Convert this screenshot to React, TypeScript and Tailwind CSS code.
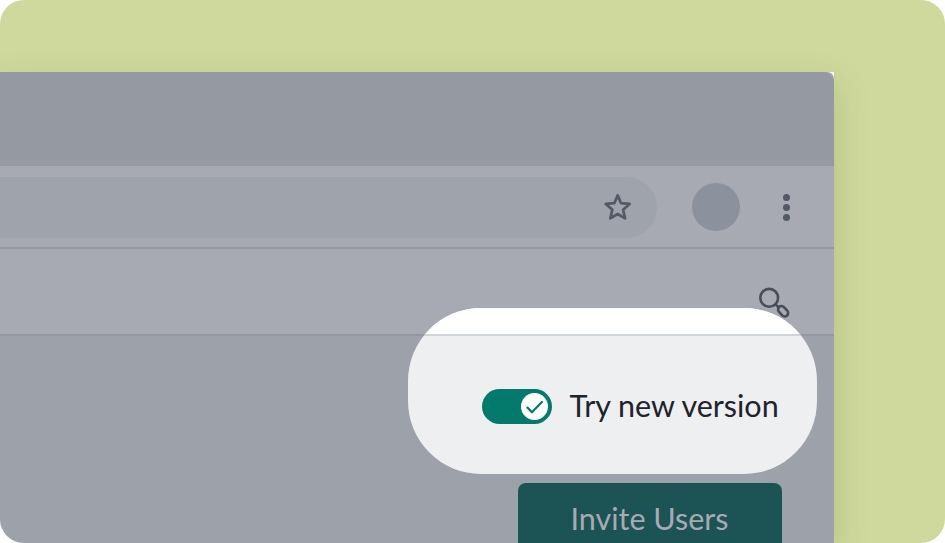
import React from "react";

function StarIcon() {
  return (
    <svg className="h-[28px] w-[28px]" viewBox="0 0 28 28" fill="none" stroke="#545966" strokeWidth="2.7" strokeLinejoin="round">
      <path d="M13.7 2.4 L17 10.1 L25.6 10.9 L19.1 16.8 L21.1 25.4 L13.7 21 L6.3 25.4 L8.3 16.8 L1.8 10.9 L10.4 10.1 Z" />
    </svg>
  );
}

function SearchIcon() {
  return (
    <svg className="h-[32px] w-[32px]" viewBox="0 0 32 32" fill="none" stroke="#474d59" strokeWidth="2.6">
      <circle cx="11.2" cy="10.8" r="8.9" />
      <path d="M17.5 17.3 L21.2 21" />
      <rect x="19.3" y="20.9" width="11.6" height="6.8" rx="3.4" transform="rotate(47 25.1 24.3)" />
    </svg>
  );
}

function Toggle() {
  return (
    <div className="flex h-[35px] w-[70px] shrink-0 items-center justify-end rounded-full bg-[#047a6c] pr-1">
      <div className="flex h-[27px] w-[27px] items-center justify-center rounded-full bg-white">
        <svg className="h-[27px] w-[27px]" viewBox="0 0 27 27" fill="none" stroke="#047a6c" strokeWidth="2.2" strokeLinecap="round" strokeLinejoin="round">
          <path d="M6.4 14.6 L10.9 19.3 L20.9 9" />
        </svg>
      </div>
    </div>
  );
}

function Spotlight() {
  return (
    <div className="absolute left-[408px] top-[236px] flex h-[166px] w-[408.5px] flex-col overflow-hidden rounded-[73px] bg-[#eeeff1]">
      <div className="h-[26px] shrink-0 bg-white" />
      <div className="h-[2px] shrink-0 bg-[#cfd4da]" />
      <div className="flex items-center pl-[74px] pt-[53px]">
        <Toggle />
        <span className="-mt-[4px] ml-[17.5px] whitespace-nowrap text-[30.5px] leading-[34px] text-[#20232b]">Try new version</span>
      </div>
    </div>
  );
}

export default function App() {
  return (
    <div className="h-[543px] w-[945px] overflow-hidden bg-white font-['Lato',sans-serif]">
      <div className="h-full overflow-hidden rounded-[24px] bg-[#cfd99d] pt-[72px]">
        <div className="w-[834px] bg-white shadow-[0_12px_32px_rgba(80,90,70,0.22)]">
          <div className="relative flex h-[471px] flex-col rounded-tr-[7px] bg-[#9da1aa]">
            <div className="h-[94px] shrink-0 rounded-tr-[12px] bg-[#9599a2]" />
            <div className="flex h-[81px] shrink-0 items-center bg-[#a7aab2] pt-[1.5px]">
              <div className="flex h-[61px] w-[657px] items-center justify-end rounded-r-full bg-[#9fa3ab] pr-[25.5px]">
                <StarIcon />
              </div>
              <div className="ml-[35px] h-[48px] w-[48px] rounded-full bg-[#8b929e]" />
              <div className="ml-[42.5px] flex flex-col gap-[3px]">
                <div className="h-[7px] w-[7px] rounded-full bg-[#545966]" />
                <div className="h-[7px] w-[7px] rounded-full bg-[#545966]" />
                <div className="h-[7px] w-[7px] rounded-full bg-[#545966]" />
              </div>
            </div>
            <div className="h-[2px] shrink-0 bg-[#9297a1]" />
            <div className="flex h-[85px] shrink-0 justify-end bg-[#a7aab2] pr-[44px] pt-[38px]">
              <SearchIcon />
            </div>
            <div className="h-[2px] shrink-0 bg-[#9297a1]" />
            <div className="flex flex-1 justify-end overflow-hidden pr-[52.5px] pt-[147px]">
              <button className="flex h-[72px] w-[264px] shrink-0 items-center justify-center rounded-[8px] bg-[#1c5354] text-[30.5px] text-[#a7aab2]">
                Invite Users
              </button>
            </div>
            <Spotlight />
          </div>
        </div>
      </div>
    </div>
  );
}
